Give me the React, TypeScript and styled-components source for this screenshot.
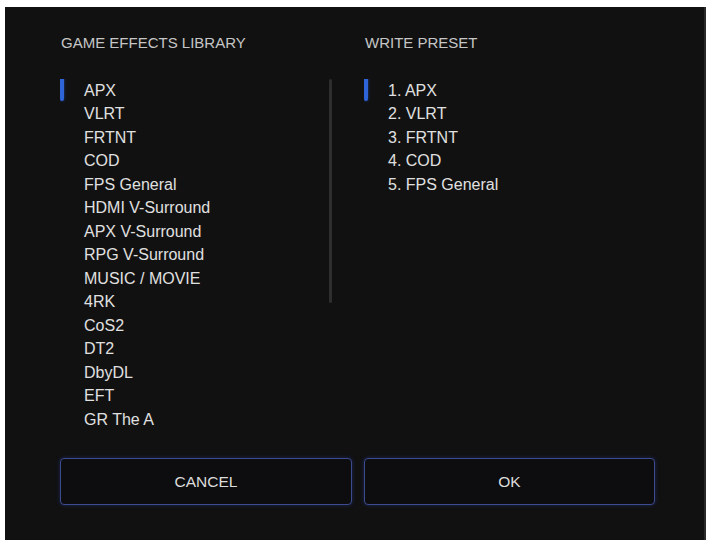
import React from "react";
import styled, { createGlobalStyle } from "styled-components";

const Global = createGlobalStyle`
  html, body { margin: 0; padding: 0; background: #ffffff; }
  body { font-family: "Liberation Sans", Arial, sans-serif; }
`;

const Panel = styled.div`
  margin: 7px 3px 0 5px;
  height: 533px;
  box-sizing: border-box;
  background: #111111;
  border-right: 2px solid #2a2a2a;
  padding: 27px 49px 0 55px;
  display: flex;
  flex-direction: column;
`;

const Columns = styled.div`
  display: grid;
  grid-template-columns: 292px 291px;
  column-gap: 12px;
`;

const Column = styled.div`
  display: flex;
  flex-direction: column;
`;

const Heading = styled.div`
  font-size: 15px;
  line-height: 17px;
  color: #c6c6c6;
  padding-left: 1px;
`;

const ListArea = styled.div`
  margin-top: 28px;
  height: 353px;
  display: flex;
  overflow: hidden;
`;

const List = styled.ul`
  list-style: none;
  margin: 0;
  padding: 0;
  flex: 1;
`;

const Item = styled.li`
  height: 23.5px;
  display: flex;
  align-items: center;
  gap: 20px;
  font-size: 16px;
  color: #e0e0e0;
`;

const Marker = styled.span<{ $on: boolean }>`
  width: 4px;
  height: 24px;
  border-radius: 2px;
  flex: none;
  margin-top: -3px;
  background: ${(p) => (p.$on ? "#2f63d8" : "transparent")};
  box-shadow: ${(p) => (p.$on ? "0 0 3px rgba(47,99,216,0.6)" : "none")};
`;

const Thumb = styled.div`
  width: 3px;
  height: 224px;
  margin-right: 20px;
  border-radius: 2px;
  background: #2e2e2e;
  flex: none;
`;

const Buttons = styled.div`
  margin-top: 26px;
  display: grid;
  grid-template-columns: 292px 291px;
  column-gap: 12px;
`;

const Button = styled.button`
  height: 47px;
  background: #0d0d0f;
  border: 1.5px solid #3d4c8e;
  border-radius: 4px;
  box-shadow: 0 0 4px rgba(40, 60, 160, 0.45);
  color: #dcdcdc;
  font-family: "Liberation Sans", Arial, sans-serif;
  font-size: 15.5px;
  cursor: pointer;
`;

const library = [
  "APX",
  "VLRT",
  "FRTNT",
  "COD",
  "FPS General",
  "HDMI V-Surround",
  "APX V-Surround",
  "RPG V-Surround",
  "MUSIC / MOVIE",
  "4RK",
  "CoS2",
  "DT2",
  "DbyDL",
  "EFT",
  "GR The A",
];

const presets = ["1. APX", "2. VLRT", "3. FRTNT", "4. COD", "5. FPS General"];

export default function App() {
  return (
    <>
      <Global />
      <Panel>
        <Columns>
          <Column>
            <Heading>GAME EFFECTS LIBRARY</Heading>
            <ListArea>
              <List>
                {library.map((name, i) => (
                  <Item key={name}>
                    <Marker $on={i === 0} />
                    {name}
                  </Item>
                ))}
              </List>
              <Thumb />
            </ListArea>
          </Column>
          <Column>
            <Heading>WRITE PRESET</Heading>
            <ListArea>
              <List>
                {presets.map((name, i) => (
                  <Item key={name}>
                    <Marker $on={i === 0} />
                    {name}
                  </Item>
                ))}
              </List>
            </ListArea>
          </Column>
        </Columns>
        <Buttons>
          <Button>CANCEL</Button>
          <Button>OK</Button>
        </Buttons>
      </Panel>
    </>
  );
}
